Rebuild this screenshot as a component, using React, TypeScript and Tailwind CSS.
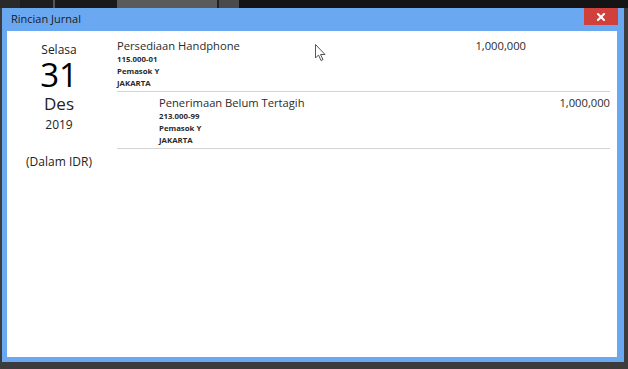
import React from "react";

const font = { fontFamily: '"Open Sans", "Noto Sans", sans-serif' };

function Entry({ indent, name, code, amount, credit }: { indent: boolean; name: string; code: string; amount: string; credit: boolean }) {
  return (
    <div className="flex h-[57px] border-b border-[#d4d4d4] pt-[4px]">
      <div className={indent ? "w-[42px] shrink-0" : "w-0 shrink-0"} />
      <div className="flex-1">
        <div className="text-[11.2px] leading-[14px] text-[#2a2a2a]">{name}</div>
        <div className="text-[7.8px] font-bold leading-[12px] text-[#2a2a2a]">{code}</div>
        <div className="text-[7.8px] font-bold leading-[12px] text-[#2a2a2a]">Pemasok Y</div>
        <div className="text-[7.8px] font-bold leading-[12px] text-[#2a2a2a]">JAKARTA</div>
      </div>
      <div className="w-[84px] shrink-0 text-right text-[11.2px] leading-[14px] text-[#2a2a2a]">{credit ? "" : amount}</div>
      <div className="w-[84px] shrink-0 text-right text-[11.2px] leading-[14px] text-[#2a2a2a]">{credit ? amount : ""}</div>
    </div>
  );
}

export default function App() {
  return (
    <div className="relative h-[369px] w-[628px] overflow-hidden bg-[#3c3c3c]" style={font}>
      <div className="flex h-[8px]">
        <div className="h-full w-[20px] bg-[#2a2a2a]" />
        <div className="h-full w-[33px] bg-[#1e1e1e]" />
        <div className="h-full w-[2px] bg-[#555]" />
        <div className="h-full w-[62px] bg-[#1a1a1a]" />
        <div className="h-full w-[100px] bg-[#5a5a5a]" />
        <div className="h-full w-[2px] bg-[#222]" />
        <div className="h-full w-[20px] bg-[#4a4a4a]" />
        <div className="h-full flex-1 bg-[#141414]" />
      </div>
      <div className="ml-[2px] flex h-[354px] w-[622px] flex-col bg-[#6aa8f2]">
        <div className="flex h-[23px] items-center justify-between">
          <span className="pl-[9px] text-[11px] text-[#1a1a1a]">Rincian Jurnal</span>
          <div className="mr-[6px] flex h-[17px] w-[34px] items-center justify-center self-start bg-[#d0413e]">
            <svg width="8" height="8" viewBox="0 0 8 8">
              <path d="M1 1 L7 7 M7 1 L1 7" stroke="#fff" strokeWidth="2" strokeLinecap="square" />
            </svg>
          </div>
        </div>
        <div className="mb-[5px] ml-[5px] mr-[7px] flex flex-1 bg-white pt-[4px]">
          <div className="flex w-[104px] shrink-0 flex-col items-center text-[#222]">
            <div className="mt-[7px] text-[12px] leading-[16px]">Selasa</div>
            <div className="text-[33px] leading-[34px] text-black">31</div>
            <div className="mt-[2px] text-[17px] leading-[20px]">Des</div>
            <div className="mt-[3px] text-[12px] leading-[16px]">2019</div>
            <div className="mt-[21px] text-[12px] leading-[16px]">(Dalam IDR)</div>
          </div>
          <div className="ml-[6px] mr-[7px] flex-1">
            <Entry indent={false} name="Persediaan Handphone" code="115.000-01" amount="1,000,000" credit={false} />
            <Entry indent={true} name="Penerimaan Belum Tertagih" code="213.000-99" amount="1,000,000" credit={true} />
          </div>
        </div>
      </div>
      <svg className="absolute left-[315px] top-[44px]" width="12" height="18" viewBox="0 0 12 18">
        <path d="M0.5 0.5 L0.5 14 L3.5 11 L6 16.5 L8 15.5 L5.5 10.5 L10 10.5 Z" fill="#fff" stroke="#555" strokeWidth="1" strokeLinejoin="round" />
      </svg>
    </div>
  );
}
